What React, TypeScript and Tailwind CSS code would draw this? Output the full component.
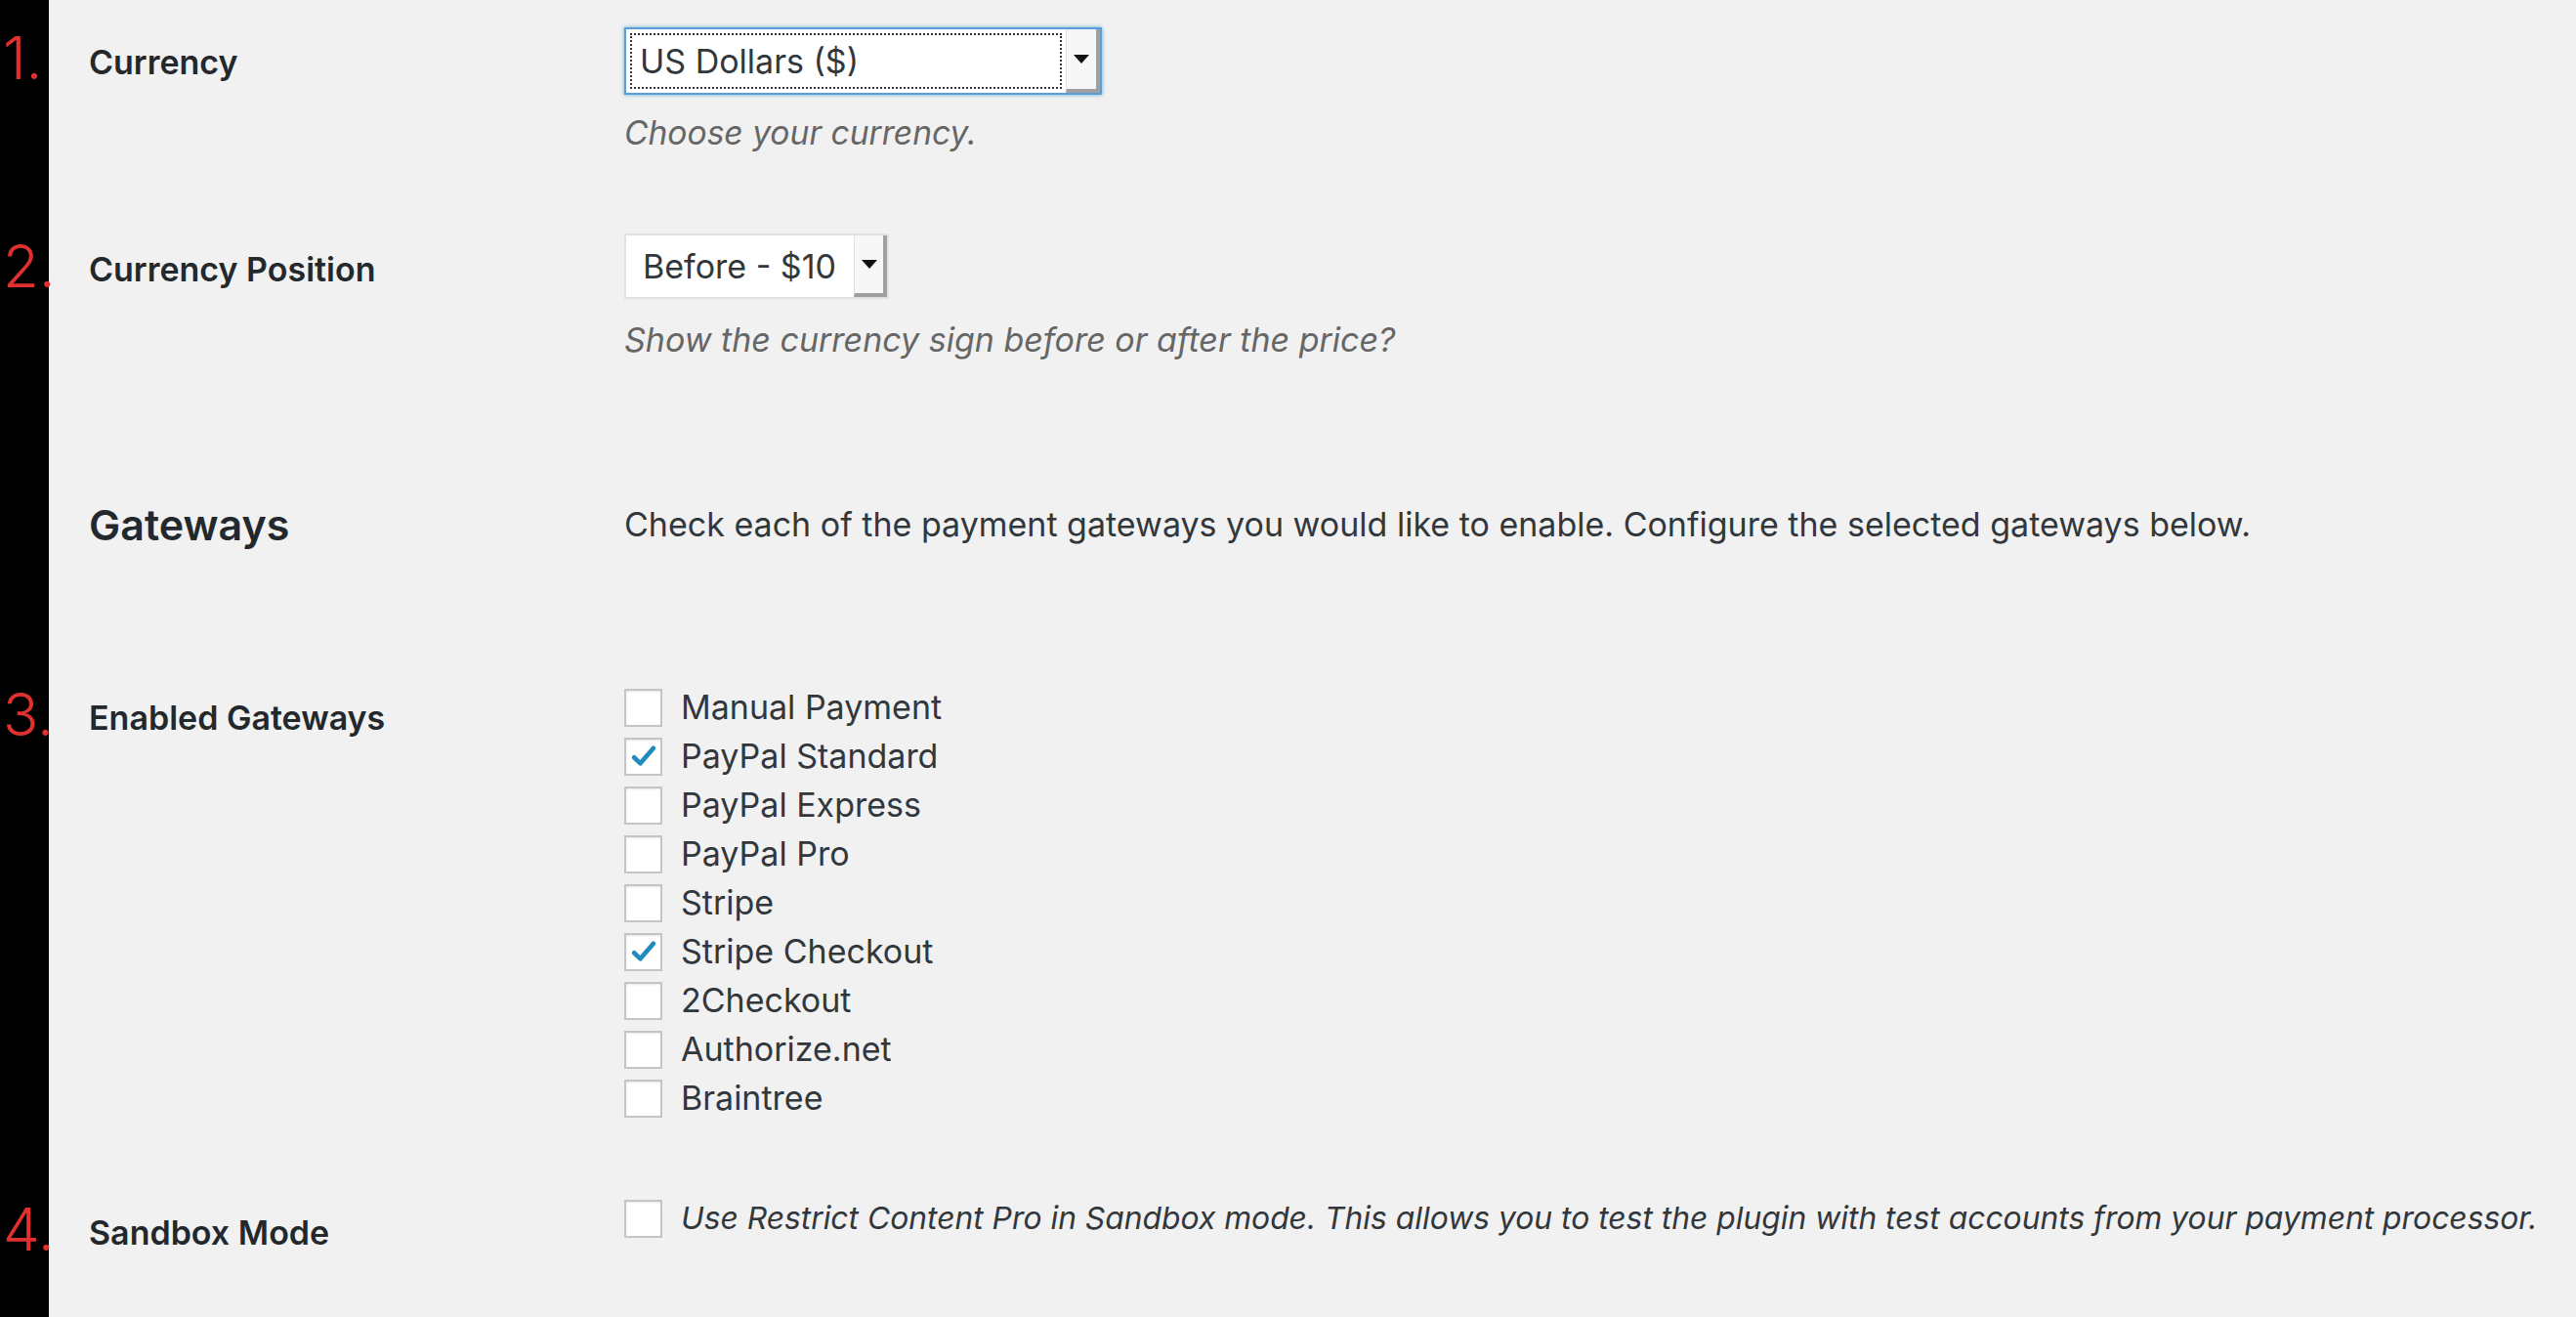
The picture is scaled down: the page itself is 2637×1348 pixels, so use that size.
import React from "react";

const font = { fontFamily: "Inter, 'Liberation Sans', sans-serif" };

function Num({ n, pt }: { n: string; pt: string }) {
  return (
    <div className={`${pt} pl-[3px] text-[60px] leading-[58px] font-light text-[#e0312f]`}>{n}</div>
  );
}

function Check({ checked }: { checked?: boolean }) {
  return (
    <div className="w-[39px] h-[39px] shrink-0 bg-white border-2 border-[#c3c6c9] shadow-[inset_0_1px_2px_rgba(0,0,0,0.1)] flex items-center justify-center">
      {checked && (
        <svg width="32" height="32" viewBox="0 0 20 20">
          <path d="M3.8 10.8 L7.8 14.6 L16.2 4.8" fill="none" stroke="#1e8cbe" strokeWidth="2.9" strokeLinecap="round" strokeLinejoin="round" />
        </svg>
      )}
    </div>
  );
}

function Arrow() {
  return (
    <svg width="16" height="10" viewBox="0 0 16 10">
      <path d="M0 0 H16 L8 9 Z" fill="#111" />
    </svg>
  );
}

const gateways: [string, boolean][] = [
  ["Manual Payment", false],
  ["PayPal Standard", true],
  ["PayPal Express", false],
  ["PayPal Pro", false],
  ["Stripe", false],
  ["Stripe Checkout", true],
  ["2Checkout", false],
  ["Authorize.net", false],
  ["Braintree", false],
];

export default function App() {
  return (
    <div
      style={font}
      className="w-[2637px] h-[1348px] overflow-hidden bg-[linear-gradient(to_right,#000_0px,#000_50px,#f1f1f1_50px)]"
    >
      {/* Row 1 */}
      <div className="grid grid-cols-[91px_548px_1fr] pt-[28px]">
        <Num n="1." pt="pt-[2px]" />
        <div className="pt-[14px] leading-[44px] text-[34px] font-semibold text-[#23282d]">Currency</div>
        <div>
          <div className="w-[489px] h-[69px] bg-white border-2 border-[#5b9dd9] shadow-[0_0_4px_rgba(30,140,190,0.7)] flex">
            <div className="flex-1 m-[4px] border-2 border-dotted border-[#333] flex items-center pl-[8px] text-[34px] text-[#32373c]">
              US Dollars ($)
            </div>
            <div className="w-[35px] bg-[#f7f7f7] border-r-[4px] border-b-[4px] border-r-[#a0a0a0] border-b-[#a0a0a0] border-l border-l-[#e0e0e0] flex items-center justify-center">
              <Arrow />
            </div>
          </div>
          <div className="mt-[17px] leading-[44px] text-[33.6px] italic text-[#666]">Choose your currency.</div>
        </div>
      </div>

      {/* Row 2 */}
      <div className="grid grid-cols-[91px_548px_1fr] pt-[81px]">
        <Num n="2." pt="pt-[4px]" />
        <div className="pt-[15px] leading-[44px] text-[34px] font-semibold text-[#23282d]">Currency Position</div>
        <div>
          <div className="w-[271px] h-[67px] bg-white border-2 border-[#e2e2e2] flex">
            <div className="flex-1 flex items-center pl-[17px] text-[34px] text-[#32373c]">Before - $10</div>
            <div className="w-[34px] bg-[#f7f7f7] border-r-[4px] border-b-[4px] border-r-[#a0a0a0] border-b-[#a0a0a0] border-l border-l-[#e0e0e0] flex items-center justify-center">
              <Arrow />
            </div>
          </div>
          <div className="mt-[20px] leading-[44px] text-[34px] italic text-[#666]">
            Show the currency sign before or after the price?
          </div>
        </div>
      </div>

      {/* Gateways heading */}
      <div className="grid grid-cols-[91px_548px_1fr] pt-[141px]">
        <div />
        <div className="leading-[52px] text-[43px] font-semibold text-[#23282d]">Gateways</div>
        <div className="leading-[52px] text-[34px] text-[#32373c]">
          Check each of the payment gateways you would like to enable. Configure the selected gateways below.
        </div>
      </div>

      {/* Row 3 */}
      <div className="grid grid-cols-[91px_548px_1fr] pt-[136px]">
        <Num n="3." pt="pt-[3px]" />
        <div className="pt-[14px] leading-[44px] text-[34px] font-semibold text-[#23282d]">Enabled Gateways</div>
        <div className="flex flex-col">
          {gateways.map(([name, c]) => (
            <div key={name} className="h-[50px] flex items-center gap-[19px]">
              <Check checked={c} />
              <span className="text-[34px] leading-[44px] text-[#32373c]">{name}</span>
            </div>
          ))}
        </div>
      </div>

      {/* Row 4 */}
      <div className="grid grid-cols-[91px_548px_1fr] pt-[73px]">
        <Num n="4." pt="pt-[7px]" />
        <div className="pt-[18px] leading-[44px] text-[34px] font-semibold text-[#23282d]">Sandbox Mode</div>
        <div className="h-[50px] flex items-center gap-[19px]">
          <Check />
          <span className="text-[31.8px] leading-[44px] italic text-[#32373c] whitespace-nowrap">
            Use Restrict Content Pro in Sandbox mode. This allows you to test the plugin with test accounts from your payment processor.
          </span>
        </div>
      </div>
    </div>
  );
}
